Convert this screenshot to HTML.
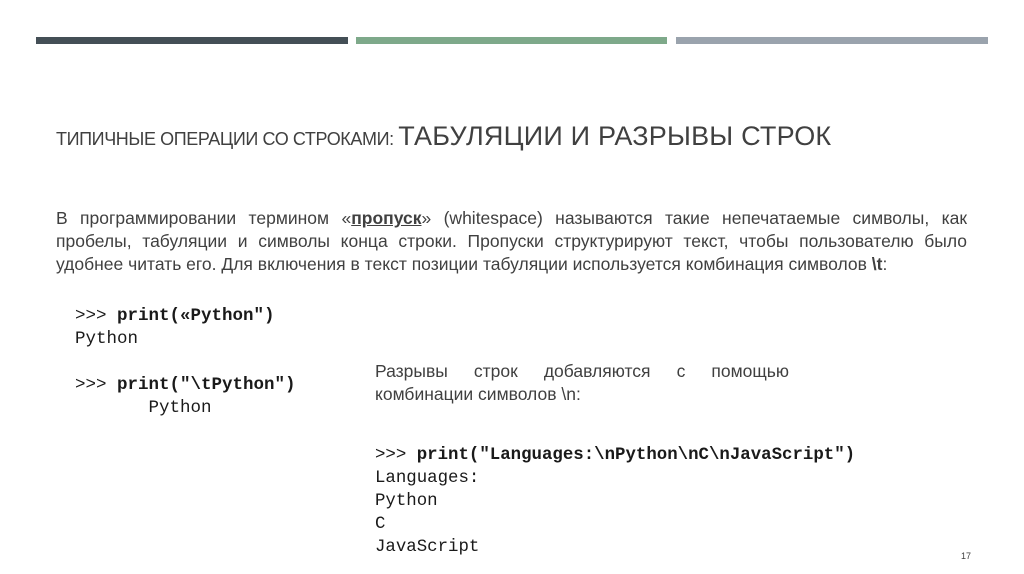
<!DOCTYPE html>
<html><head><meta charset="utf-8"><style>
html,body{margin:0;padding:0;background:#fff;width:1024px;height:574px;overflow:hidden;position:relative;font-family:"Liberation Sans",sans-serif;color:#404040}
.bar{position:absolute;top:37px;height:7px}
.t{position:absolute;left:56px;top:121px;white-space:nowrap;color:#404040}
.t .s{font-size:18px;letter-spacing:-0.4px}
.t .l{font-size:27px;letter-spacing:0.2px}
.p{position:absolute;left:56px;width:911px;top:207px;font-size:17.5px;line-height:23px;color:#404040;white-space:nowrap}
.p div,.r div{text-align:justify;text-align-last:justify}
.p div.n,.r div.n{text-align:left;text-align-last:left}
.code{position:absolute;font-family:"Liberation Mono",monospace;line-height:23px;color:#1a1a1a;white-space:pre}
.r{position:absolute;left:375px;width:414px;top:360px;font-size:17.5px;line-height:23px;color:#404040;white-space:nowrap}
</style></head><body>
<div class="bar" style="left:36px;width:312px;background:#444f56"></div>
<div class="bar" style="left:356px;width:311px;background:#7ea98a"></div>
<div class="bar" style="left:676px;width:312px;background:#9aa3ad"></div>
<div class="t"><span class="s">ТИПИЧНЫЕ ОПЕРАЦИИ СО СТРОКАМИ:</span> <span class="l">ТАБУЛЯЦИИ И РАЗРЫВЫ СТРОК</span></div>
<div class="p">
<div>В программировании термином «<b><u>пропуск</u></b>» (whitespace) называются такие непечатаемые символы, как</div>
<div>пробелы, табуляции и символы конца строки. Пропуски структурируют текст, чтобы пользователю было</div>
<div class="n">удобнее читать его. Для включения в текст позиции табуляции используется комбинация символов <b>\t</b>:</div>
</div>
<div class="code" style="left:75px;top:305px;font-size:17.5px">&gt;&gt;&gt; <b>print(«Python")</b>
Python

&gt;&gt;&gt; <b>print("\tPython")</b>
       Python</div>
<div class="r"><div>Разрывы строк добавляются с помощью</div><div class="n">комбинации символов \n:</div></div>
<div class="code" style="left:375px;top:444px;font-size:17.4px">&gt;&gt;&gt; <b>print("Languages:\nPython\nC\nJavaScript")</b>
Languages:
Python
C
JavaScript</div>
<div style="position:absolute;left:961px;top:551px;font-size:9px;color:#404040">17</div>
</body></html>
